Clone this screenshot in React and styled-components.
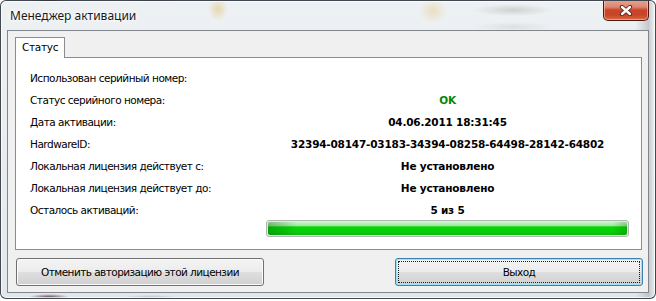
import React from 'react';
import styled, { createGlobalStyle } from 'styled-components';

const Global = createGlobalStyle`
  html, body { margin: 0; padding: 0; background: #ffffff; }
  body { width: 656px; height: 301px; overflow: hidden; }
  #root { width: 656px; }
`;

const UI_FONT = `"DejaVu Sans", Tahoma, sans-serif`;

const Window = styled.div`
  box-sizing: border-box;
  width: 656px;
  height: 299px;
  border: 1px solid rgba(38, 44, 52, 0.85);
  border-radius: 6px;
  display: flex;
  flex-direction: column;
  padding: 0 6px 5px 6px;
  background:
    radial-gradient(ellipse 10px 12px at 217px 8px, rgba(225, 196, 120, 0.55), transparent),
    radial-gradient(ellipse 14px 12px at 432px 10px, rgba(225, 200, 130, 0.45), transparent),
    radial-gradient(ellipse 40px 6px at 512px 9px, rgba(150, 150, 150, 0.35), transparent),
    radial-gradient(ellipse 40px 5px at 512px 26px, rgba(170, 170, 170, 0.25), transparent),
    radial-gradient(ellipse 20px 3px at 48px 296px, rgba(60, 20, 20, 0.7), transparent),
    radial-gradient(ellipse 30px 3px at 150px 297px, rgba(90, 90, 90, 0.35), transparent),
    linear-gradient(90deg, rgba(255,255,255,0) 97%, rgba(170,175,180,0.6) 99%, rgba(255,255,255,0.3) 100%),
    linear-gradient(180deg, #eef1f3 0%, #e9edf0 50%, #e2e7eb 100%);
  box-shadow: inset 0 0 0 1px rgba(255, 255, 255, 0.7);
  overflow: hidden;
`;

const TitleBar = styled.div`
  flex-shrink: 0;
  height: 29px;
  display: flex;
  align-items: flex-start;
  justify-content: space-between;
`;

const Title = styled.div`
  margin: 7px 0 0 3px;
  font-family: "Noto Sans", "Open Sans", sans-serif;
  font-size: 12px;
  line-height: 16px;
  color: #1a1a1a;
  text-shadow: 0 0 6px #ffffff, 0 0 3px #ffffff;
`;

const CloseButton = styled.div`
  box-sizing: border-box;
  width: 46px;
  height: 21px;
  margin-top: -1px;
  border: 1px solid #4a1a12;
  border-top: none;
  border-radius: 0 0 5px 5px;
  background: linear-gradient(180deg, #e8a493 0%, #dc8770 35%, #c9452a 50%, #c84528 75%, #d66a45 100%);
  box-shadow: inset 0 0 0 1px rgba(255, 210, 190, 0.55);
  display: flex;
  align-items: center;
  justify-content: center;
`;

const Client = styled.div`
  flex: 1;
  min-height: 0;
  box-sizing: border-box;
  border: 1px solid #80868b;
  background: #f0f0f0;
  padding: 6px 6px 6px 7px;
  display: flex;
  flex-direction: column;
  font-family: ${UI_FONT};
  font-size: 10.5px;
  color: #000;
`;

const TabStrip = styled.div`
  display: flex;
`;

const Tab = styled.div`
  position: relative;
  z-index: 1;
  box-sizing: border-box;
  height: 21px;
  margin-bottom: -1px;
  padding: 0 6px 0 6px;
  border: 1px solid #898c95;
  border-bottom: none;
  background: #ffffff;
  line-height: 19px;
  letter-spacing: -0.3px;
`;

const Panel = styled.div`
  border: 1px solid #898c95;
  background: #ffffff;
  padding: 9px 12px 12px 14px;
  display: grid;
  grid-template-columns: 236px 1fr;
  grid-template-rows: repeat(7, 22px) 16px;
  align-items: center;
`;

const Label = styled.div`
  letter-spacing: -0.5px;
  white-space: nowrap;
`;

const Value = styled.div`
  text-align: center;
  font-weight: bold;
  letter-spacing: -0.2px;
  white-space: nowrap;
  color: ${(p) => (p.$ok ? '#078607' : '#000')};
`;

const ProgressTrack = styled.div`
  grid-column: 2;
  align-self: start;
  box-sizing: border-box;
  height: 17px;
  margin-top: -1px;
  border: 1px solid #b3b3b3;
  border-radius: 3px;
  padding: 1px;
  background: #e6e6e6;
`;

const ProgressFill = styled.div`
  height: 100%;
  border-radius: 2px;
  background:
    linear-gradient(90deg, rgba(0, 90, 0, 0.35) 0%, rgba(0, 90, 0, 0) 8%, rgba(0,0,0,0) 96%, rgba(0, 90, 0, 0.25) 100%),
    linear-gradient(180deg, #c8f5c8 0%, #9ee89e 28%, #08d408 38%, #06d006 75%, #10b810 100%);
`;

const ButtonRow = styled.div`
  margin-top: 8px;
  padding-left: 1px;
  margin-right: -1px;
  display: flex;
  justify-content: space-between;
`;

const Button = styled.div`
  position: relative;
  box-sizing: border-box;
  width: 248px;
  height: 28px;
  border: 1px solid ${(p) => (p.$default ? '#3c7fb1' : '#707070')};
  border-radius: 3px;
  background: linear-gradient(180deg, #f4f4f4 0%, #ececec 48%, #dedede 52%, #d0d0d0 100%);
  box-shadow: inset 0 0 0 1px ${(p) => (p.$default ? '#9fe0f7' : '#fbfbfb')};
  display: flex;
  align-items: center;
  justify-content: center;
  letter-spacing: -0.55px;
  font-size: 10.5px;

  &::after {
    content: '';
    display: ${(p) => (p.$default ? 'block' : 'none')};
    position: absolute;
    inset: 2px;
    border: 1px dotted #1c1c1c;
  }
`;

const rows = [
  { label: 'Использован серийный номер:', value: '' },
  { label: 'Статус серийного номера:', value: 'OK', ok: true },
  { label: 'Дата активации:', value: '04.06.2011 18:31:45' },
  { label: 'HardwareID:', value: '32394-08147-03183-34394-08258-64498-28142-64802' },
  { label: 'Локальная лицензия действует с:', value: 'Не установлено' },
  { label: 'Локальная лицензия действует до:', value: 'Не установлено' },
  { label: 'Осталось активаций:', value: '5 из 5' },
];

export default function App() {
  return (
    <>
      <Global />
      <Window>
        <TitleBar>
          <Title>Менеджер активации</Title>
          <CloseButton>
            <svg width="14" height="11" viewBox="0 0 14 11">
              <path d="M3 2 L11 9 M11 2 L3 9" stroke="#5a2016" strokeWidth="4.2" strokeLinecap="round" />
              <path d="M3 2 L11 9 M11 2 L3 9" stroke="#ffffff" strokeWidth="2.4" strokeLinecap="round" />
            </svg>
          </CloseButton>
        </TitleBar>
        <Client>
          <TabStrip>
            <Tab>Статус</Tab>
          </TabStrip>
          <Panel>
            {rows.map((r) => (
              <React.Fragment key={r.label}>
                <Label>{r.label}</Label>
                <Value $ok={r.ok}>{r.value}</Value>
              </React.Fragment>
            ))}
            <ProgressTrack>
              <ProgressFill style={{ width: '100%' }} />
            </ProgressTrack>
          </Panel>
          <ButtonRow>
            <Button>Отменить авторизацию этой лицензии</Button>
            <Button $default>Выход</Button>
          </ButtonRow>
        </Client>
      </Window>
    </>
  );
}
